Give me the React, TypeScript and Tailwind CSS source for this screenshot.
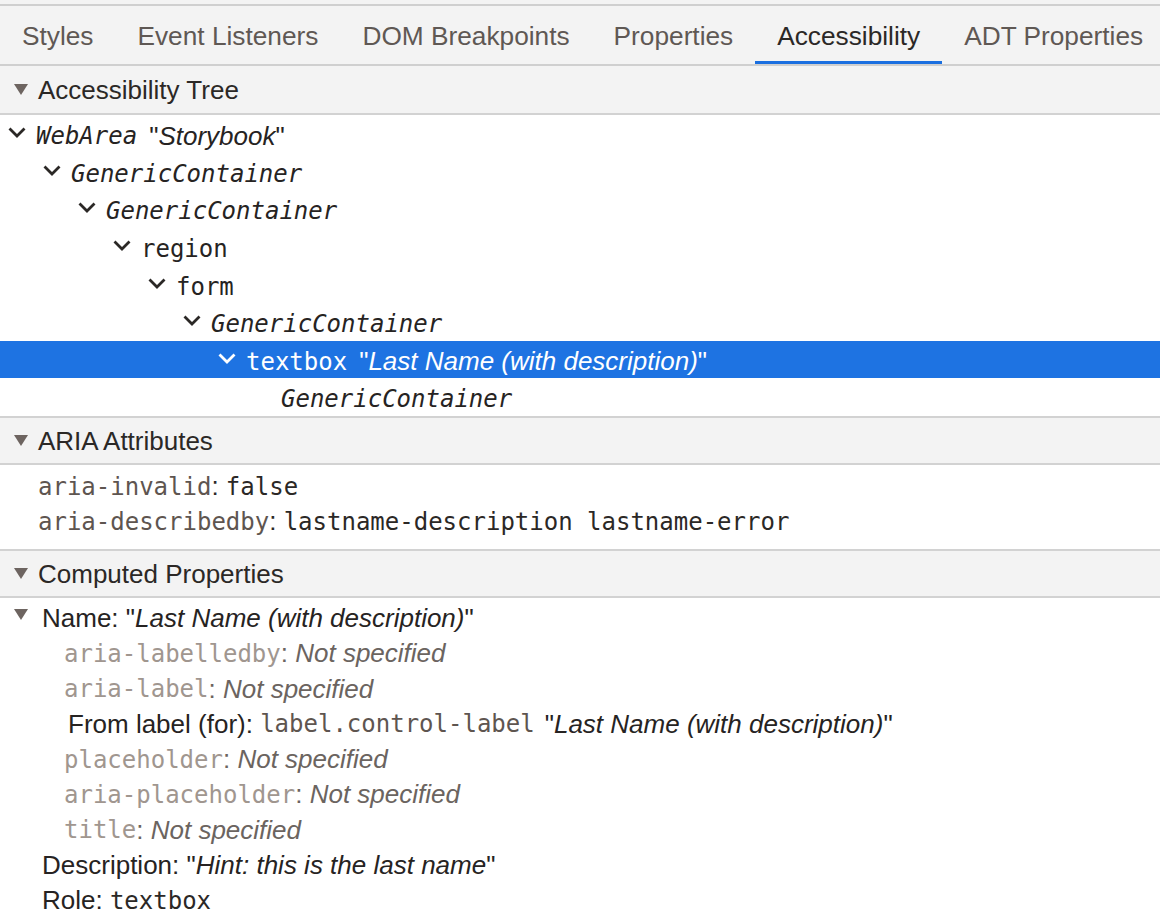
import React from 'react';

const sans = "font-['Liberation_Sans',Arial,sans-serif]";
const mono = "font-['DejaVu_Sans_Mono',monospace]";

const tabs = ['Styles', 'Event Listeners', 'DOM Breakpoints', 'Properties', 'Accessibility', 'ADT Properties'];

function Triangle({ className }: { className?: string }) {
  return (
    <svg width="14" height="11" viewBox="0 0 14 11" className={className ?? 'shrink-0'}>
      <polygon points="0,0 14,0 7,11" fill="#6d6460" />
    </svg>
  );
}

function Chevron({ white }: { white?: boolean }) {
  return (
    <svg width="18" height="11" viewBox="0 0 18 11" className="shrink-0 -mt-[7px]">
      <polyline points="1.5,1.5 9,9 16.5,1.5" fill="none" stroke={white ? '#ffffff' : '#2b2826'} strokeWidth="2.8" />
    </svg>
  );
}

function SectionHeader({ title, top }: { title: string; top?: boolean }) {
  return (
    <div
      className={`h-[49px] ${top ? '' : 'h-[48px] border-t-2'} border-b-2 border-[#d2d2d2] bg-[#f3f3f3] flex items-center pl-[14px] ${sans} text-[26px] text-[#2b2826]`}
    >
      <Triangle />
      <span className="ml-[10px] pt-[2px]">{title}</span>
    </div>
  );
}

type Node = { level: number; role: string; italicRole?: boolean; name?: string; expandable: boolean; selected?: boolean };

const tree: Node[] = [
  { level: 0, role: 'WebArea', italicRole: true, name: 'Storybook', expandable: true },
  { level: 1, role: 'GenericContainer', italicRole: true, expandable: true },
  { level: 2, role: 'GenericContainer', italicRole: true, expandable: true },
  { level: 3, role: 'region', expandable: true },
  { level: 4, role: 'form', expandable: true },
  { level: 5, role: 'GenericContainer', italicRole: true, expandable: true },
  { level: 6, role: 'textbox', name: 'Last Name (with description)', expandable: true, selected: true },
  { level: 7, role: 'GenericContainer', italicRole: true, expandable: false },
];

function TreeRow({ n }: { n: Node }) {
  const indent = [
    'pl-[8px]',
    'pl-[43px]',
    'pl-[78px]',
    'pl-[113px]',
    'pl-[148px]',
    'pl-[183px]',
    'pl-[218px]',
    'pl-[253px]',
  ][n.level];
  return (
    <div
      className={`h-[37.6px] flex items-center pt-[5px] ${indent} ${
        n.selected ? 'bg-[#1e73e2] text-white' : 'text-[#262322]'
      }`}
    >
      <div className="w-[28px] shrink-0 flex">{n.expandable && <Chevron white={n.selected} />}</div>
      <span className={`${mono} text-[24px] ${n.italicRole ? 'italic' : ''}`}>{n.role}</span>
      {n.name && (
        <span className={`${sans} text-[26px] ml-[12px]`}>
          "<span className="italic">{n.name}</span>"
        </span>
      )}
    </div>
  );
}

function AttrRow({ name, value }: { name: string; value: string }) {
  return (
    <div className="h-[35px] flex items-center pl-[38px]">
      <span className={`${mono} text-[24px] text-[#5e5550]`}>{name}</span>
      <span className={`${sans} text-[26px] text-[#2b2826]`}>:&nbsp;</span>
      <span className={`${mono} text-[24px] text-[#2b2826]`}>{value}</span>
    </div>
  );
}

function Unspecified({ name }: { name: string }) {
  return (
    <div className="h-[35.25px] flex items-center pl-[64px]">
      <span className={`${mono} text-[24px] text-[#a0968f]`}>{name}</span>
      <span className={`${sans} text-[26px] text-[#6b6460]`}>
        :&nbsp;<span className="italic">Not specified</span>
      </span>
    </div>
  );
}

export default function App() {
  return (
    <div className={`w-[1160px] h-[916px] overflow-hidden bg-white ${sans}`}>
      {/* tab strip */}
      <div className="h-[66px] bg-[#f3f3f3] pt-[4px]">
        <div className="h-[62px] border-t-2 border-b-2 border-[#cfcfcf] flex items-stretch overflow-hidden">
          {tabs.map((t) => {
            const active = t === 'Accessibility';
            return (
              <div
                key={t}
                className={`relative shrink-0 whitespace-nowrap flex items-center px-[22px] pt-[4px] text-[26.25px] ${
                  active ? 'text-[#2b2826]' : 'text-[#5f5854]'
                }`}
              >
                {t}
                {active && <div className="absolute left-0 right-0 bottom-0 h-[3px] bg-[#1a6fe0]" />}
              </div>
            );
          })}
        </div>
      </div>

      <SectionHeader title="Accessibility Tree" top />
      <div className="h-[301px]">
        {tree.map((n, i) => (
          <TreeRow key={i} n={n} />
        ))}
      </div>

      <SectionHeader title="ARIA Attributes" />
      <div className="h-[84px] pt-[4px]">
        <AttrRow name="aria-invalid" value="false" />
        <AttrRow name="aria-describedby" value="lastname-description lastname-error" />
      </div>

      <SectionHeader title="Computed Properties" />
      <div className="pt-[3px] text-[26px] text-[#262322]">
        <div className="h-[35.25px] flex items-center pl-[14px]">
          <Triangle className="shrink-0 -mt-[8px]" />
          <span className="ml-[14px]">
            Name: "<span className="italic">Last Name (with description)</span>"
          </span>
        </div>
        <Unspecified name="aria-labelledby" />
        <Unspecified name="aria-label" />
        <div className="h-[35.25px] flex items-center pl-[68px]">
          <span>From label (for):&nbsp;</span>
          <span className={`${mono} text-[24px] text-[#5e5550]`}>label.control-label</span>
          <span className="ml-[10px]">
            "<span className="italic">Last Name (with description)</span>"
          </span>
        </div>
        <Unspecified name="placeholder" />
        <Unspecified name="aria-placeholder" />
        <Unspecified name="title" />
        <div className="h-[35.25px] flex items-center pl-[42px]">
          Description: "<span className="italic">Hint: this is the last name</span>"
        </div>
        <div className="h-[35.25px] flex items-center pl-[42px]">
          <span>Role:&nbsp;</span>
          <span className={`${mono} text-[24px] text-[#2b2826]`}>textbox</span>
        </div>
      </div>
    </div>
  );
}
